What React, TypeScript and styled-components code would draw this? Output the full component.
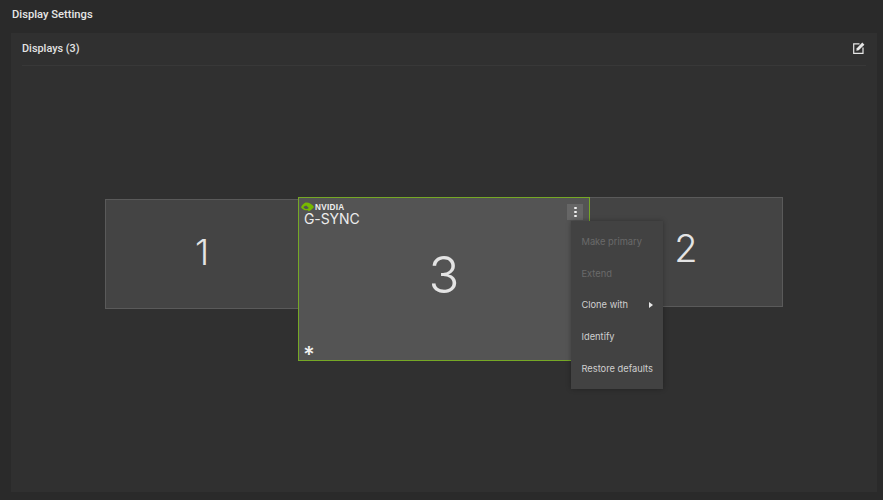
import React from "react";
import styled, { createGlobalStyle } from "styled-components";

const Global = createGlobalStyle`
  html, body { margin: 0; padding: 0; background: #2a2a2a; }
  body { font-family: Inter, "Noto Sans", "Liberation Sans", sans-serif; overflow: hidden; }
`;

const Page = styled.div`
  width: 883px;
  height: 500px;
  background: #2a2a2a;
  display: flex;
  flex-direction: column;
  padding: 0 6px 8px 11px;
  box-sizing: border-box;
`;

const Title = styled.h1`
  margin: 0;
  height: 33px;
  padding: 8px 0 0 1px;
  box-sizing: border-box;
  font-family: Roboto, Inter, sans-serif;
  font-size: 11.2px;
  line-height: 14px;
  font-weight: 500;
  color: #e6e6e6;
`;

const Panel = styled.section`
  flex: 1;
  background: #303030;
  display: flex;
  flex-direction: column;
  padding: 0 11px;
  min-height: 0;
`;

const PanelHeader = styled.header`
  height: 33px;
  box-sizing: border-box;
  flex: none;
  display: flex;
  align-items: center;
  justify-content: space-between;
  border-bottom: 1px solid #383838;
  padding-bottom: 2px;
`;

const PanelTitle = styled.h2`
  margin: 0;
  font-family: Roboto, Inter, sans-serif;
  font-size: 10.9px;
  font-weight: 500;
  color: #e2e2e2;
`;

const EditButton = styled.button`
  width: 12px;
  height: 12px;
  padding: 0;
  border: 0;
  background: none;
  color: #e6e6e6;
  display: flex;
  margin-right: 1px;
`;

const Canvas = styled.div`
  position: relative;
  flex: 1;
`;

const Monitor = styled.div<{ $x: number; $y: number; $w: number; $h: number; $active?: boolean }>`
  position: absolute;
  left: ${(p) => p.$x}px;
  top: ${(p) => p.$y}px;
  width: ${(p) => p.$w}px;
  height: ${(p) => p.$h}px;
  box-sizing: border-box;
  background: ${(p) => (p.$active ? "#545454" : "#444444")};
  border: 1px solid ${(p) => (p.$active ? "#76a826" : "#5a5a5a")};
  display: flex;
  align-items: center;
  justify-content: center;
  z-index: ${(p) => (p.$active ? 2 : 1)};
`;

const Number = styled.span<{ $size: number; $dy?: number }>`
  font-size: ${(p) => p.$size}px;
  font-weight: 300;
  line-height: 1;
  color: #e4e4e4;
  transform: translateY(${(p) => p.$dy ?? 0}px);
`;

const Brand = styled.div`
  position: absolute;
  left: 2px;
  top: 3px;
  display: flex;
  flex-direction: column;
`;

const NvidiaRow = styled.div`
  display: flex;
  align-items: center;
  gap: 1px;
  height: 12px;
`;

const NvidiaWord = styled.span`
  font-size: 8.2px;
  font-weight: 800;
  letter-spacing: 0.3px;
  color: #f0f0f0;
  font-family: "Liberation Sans", sans-serif;
`;

const Gsync = styled.span`
  font-size: 14px;
  line-height: 12px;
  font-weight: 400;
  color: #ececec;
  padding-left: 3px;
  letter-spacing: -0.1px;
`;

const Star = styled.span`
  position: absolute;
  left: 4px;
  bottom: 3px;
  font-size: 22px;
  line-height: 18px;
  height: 12px;
  font-weight: 600;
  color: #efefef;
`;

const Kebab = styled.button`
  position: absolute;
  right: 6px;
  top: 6px;
  width: 16px;
  height: 16px;
  padding: 0;
  border: 0;
  background: #666666;
  display: flex;
  flex-direction: column;
  align-items: center;
  justify-content: center;
  gap: 1.5px;
`;

const Dot = styled.i`
  display: block;
  width: 3px;
  height: 2.5px;
  background: #f2f2f2;
  border-radius: 1px;
`;

const Menu = styled.ul`
  position: absolute;
  left: 549px;
  top: 155px;
  z-index: 5;
  width: 92px;
  height: 168px;
  box-sizing: border-box;
  margin: 0;
  padding: 5px 0;
  list-style: none;
  background: #424242;
  box-shadow: 0 0 5px rgba(0, 0, 0, 0.3);
  display: flex;
  flex-direction: column;
`;

const MenuItem = styled.li<{ $disabled?: boolean }>`
  height: 31.6px;
  flex: none;
  display: flex;
  align-items: center;
  justify-content: space-between;
  padding: 0 10px 0 10.5px;
  font-size: 9.3px;
  color: ${(p) => (p.$disabled ? "#6a6a6a" : "#cfcfcf")};
  white-space: nowrap;
`;

const Caret = styled.i`
  width: 0;
  height: 0;
  border-left: 4px solid #e8e8e8;
  border-top: 3.5px solid transparent;
  border-bottom: 3.5px solid transparent;
`;

const EditIcon = () => (
  <svg width="12" height="12" viewBox="0 0 12 12" fill="none" stroke="currentColor" strokeWidth="1.2">
    <path d="M6.500 1.800H.7v9.500H10V5.500" />
    <path d="M3.300 8.700l.5-2.400L9.300.6l2.100 2.100L5.700 8.200z" fill="currentColor" stroke="none" />
  </svg>
);

const NvidiaEye = () => (
  <svg width="13" height="10" viewBox="0 0 13 10">
    <path
      fillRule="evenodd"
      fill="#76b900"
      d="M4.600.6C7.900.3 10.800 2 13 5c-1.700 2.300-3.500 3.800-5.800 4.300V8.300H4.600C2.800 8 1.200 7 0 5.200 1.200 3 2.800 1.400 4.600.6zM5.200 3.400C3.900 3.700 3 4.300 2.400 5.200c.8 1.100 1.800 1.700 3 1.800.9 0 1.700-.3 2.400-.9C7 5 6.200 4.200 5.200 3.400z"
    />
  </svg>
);

export default function App() {
  return (
    <Page>
      <Global />
      <Title>Display Settings</Title>
      <Panel>
        <PanelHeader>
          <PanelTitle>Displays (3)</PanelTitle>
          <EditButton aria-label="Edit">
            <EditIcon />
          </EditButton>
        </PanelHeader>
        <Canvas>
          <Monitor $x={83} $y={133} $w={194} $h={110}>
            <Number $size={36} $dy={-2}>1</Number>
          </Monitor>
          <Monitor $x={567} $y={131} $w={194} $h={110}>
            <Number $size={38} $dy={-4}>2</Number>
          </Monitor>
          <Monitor $x={276} $y={131} $w={292} $h={164} $active>
            <Brand>
              <NvidiaRow>
                <NvidiaEye />
                <NvidiaWord>NVIDIA</NvidiaWord>
              </NvidiaRow>
              <Gsync>G-SYNC</Gsync>
            </Brand>
            <Number $size={51} $dy={-5}>3</Number>
            <Star>*</Star>
            <Kebab aria-label="More">
              <Dot />
              <Dot />
              <Dot />
            </Kebab>
          </Monitor>
          <Menu>
            <MenuItem $disabled>Make primary</MenuItem>
            <MenuItem $disabled>Extend</MenuItem>
            <MenuItem>
              Clone with <Caret />
            </MenuItem>
            <MenuItem>Identify</MenuItem>
            <MenuItem>Restore defaults</MenuItem>
          </Menu>
        </Canvas>
      </Panel>
    </Page>
  );
}
